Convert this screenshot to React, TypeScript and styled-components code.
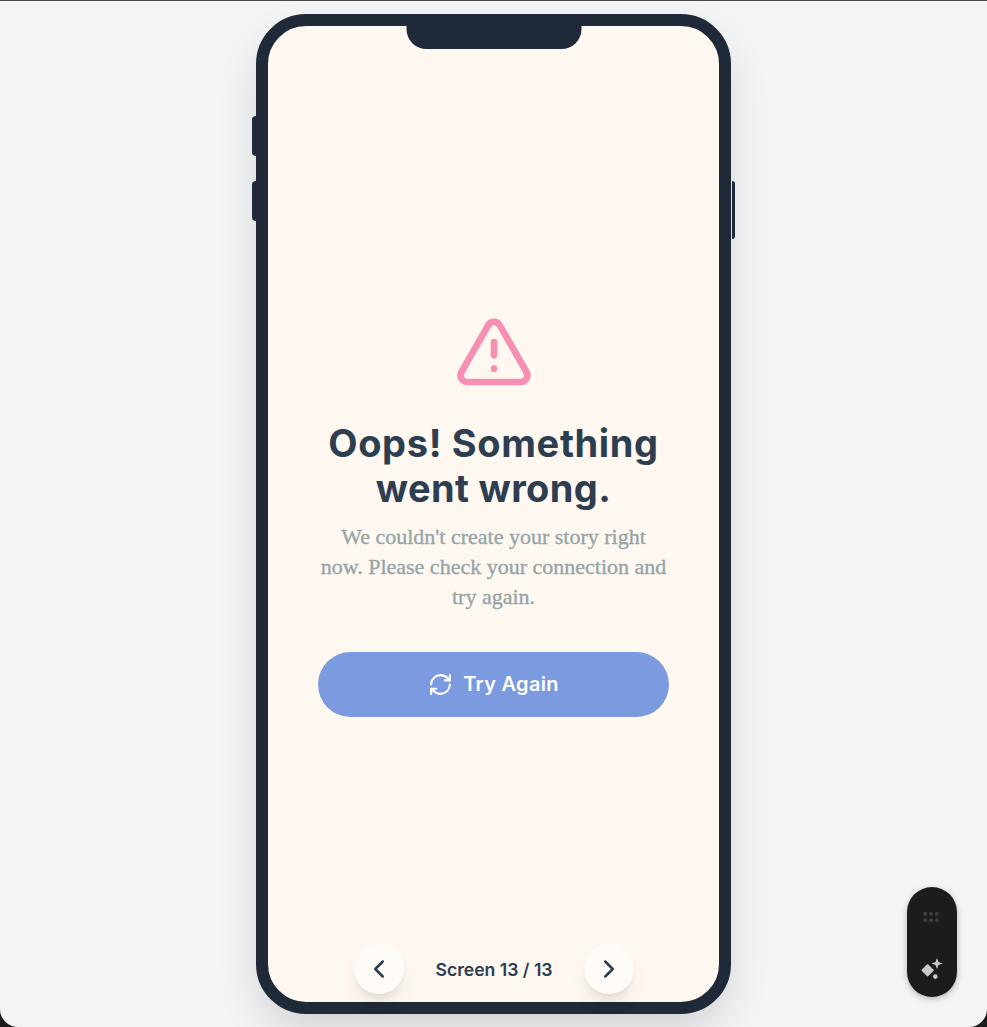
import React from "react";
import styled, { createGlobalStyle, css } from "styled-components";
import { TriangleAlert, ChevronLeft, ChevronRight, RefreshCw } from "lucide-react";

const GlobalStyle = createGlobalStyle`
  * { box-sizing: border-box; }
  body { margin: 0; background: #1c1c1c; overflow: hidden; }
`;

const Page = styled.main`
  position: relative;
  height: 1027px;
  display: flex;
  justify-content: center;
  align-items: flex-start;
  padding-top: 13px;
  background: #f3f4f6;
  border-top: 1px solid #47474a;
  border-radius: 0 0 18px 18px;
  overflow: hidden;
  font-family: Inter, sans-serif;
`;

const Phone = styled.section`
  position: relative;
  width: 475px;
  height: 1000px;
  display: flex;
  border: 12px solid #1f2937;
  border-radius: 50px;
  background: #fff8f1;
  box-shadow: 0 20px 45px -7px rgba(0, 0, 0, 0.16);
`;

const Notch = styled.div`
  position: absolute;
  top: -1px;
  left: 50%;
  width: 175px;
  height: 24px;
  transform: translateX(-50%);
  background: #1f2937;
  border-radius: 0 0 20px 20px;
`;

const SideKey = styled.div<{ $side: "left" | "right"; $top: number; $length: number }>`
  position: absolute;
  top: ${(p) => p.$top}px;
  height: ${(p) => p.$length}px;
  background: #1f2937;
  ${(p) =>
    p.$side === "left"
      ? css`left: -16px; width: 4px; border-radius: 4px 0 0 4px;`
      : css`right: -16px; width: 3px; border-radius: 0 3px 3px 0;`}
`;

const Content = styled.div`
  flex: 1;
  display: flex;
  flex-direction: column;
  align-items: center;
  justify-content: center;
  padding: 0 50px;
  text-align: center;
`;

const Title = styled.h1`
  margin: 29px 0 11px;
  color: #2c3e50;
  font: 700 38px/45px Inter, sans-serif;
`;

const Line = styled.span<{ $spacing?: number }>`
  display: block;
  white-space: nowrap;
  letter-spacing: ${(p) => p.$spacing ?? 0}px;
`;

const Message = styled.p`
  margin: 0 0 40px;
  color: #95a5a6;
  font: 400 22px/30px "Liberation Serif", serif;
  -webkit-text-stroke: 0.35px #95a5a6;
`;

const RetryButton = styled.button`
  width: 100%;
  height: 65px;
  display: flex;
  align-items: center;
  justify-content: center;
  gap: 10px;
  border: 0;
  border-radius: 33px;
  background: #7b9ae0;
  color: #fff;
  font: 600 20px/30px Inter, sans-serif;
`;

const Pager = styled.nav`
  position: absolute;
  bottom: 8px;
  left: 86px;
  width: 280px;
  display: flex;
  align-items: center;
  justify-content: space-between;
  color: #2c3e50;
`;

const PagerButton = styled.button`
  width: 50px;
  height: 50px;
  display: grid;
  place-items: center;
  padding: 0;
  border: 0;
  border-radius: 50%;
  background: #fffcf7;
  color: #2c3e50;
  box-shadow: 0 12px 19px -4px rgba(0, 0, 0, 0.1), 0 5px 8px -5px rgba(0, 0, 0, 0.1);
`;

const PageLabel = styled.span`
  padding-top: 2px;
  font: 600 17.6px/26px Inter, sans-serif;
  white-space: nowrap;
`;

const Dock = styled.aside`
  position: absolute;
  right: 30px;
  bottom: 30px;
  width: 50px;
  height: 110px;
  display: flex;
  flex-direction: column;
  align-items: center;
  justify-content: space-between;
  padding: 22px 2px 16px 0;
  border-radius: 25px;
  background: #1c1c1c;
  box-shadow: 0 2px 6px rgba(0, 0, 0, 0.25);
`;

const GripIcon = () => (
  <svg width="16" height="16" viewBox="0 0 16 16" fill="#3e3e42">
    {[2.2, 8, 13.8].map((x) =>
      [4.8, 11.2].map((y) => <circle key={`${x}-${y}`} cx={x} cy={y} r="2" />)
    )}
  </svg>
);

const SparkIcon = () => (
  <svg width="24" height="24" viewBox="0 0 24 24" fill="#c8cac8">
    <rect x="4" y="8.7" width="9.2" height="9.2" rx="1" transform="rotate(45 8.6 13.3)" />
    <path d="M18 1l1.5 4 4 1.5-4 1.5-1.5 4-1.5-4-4-1.5 4-1.5z" />
    <circle cx="16.3" cy="19.6" r="2.3" />
  </svg>
);

export default function App() {
  return (
    <>
      <GlobalStyle />
      <Page>
        <Phone>
          <Notch />
          <SideKey $side="left" $top={90} $length={40} />
          <SideKey $side="left" $top={155} $length={40} />
          <SideKey $side="right" $top={155} $length={58} />
          <Content>
            <TriangleAlert size={80} color="#f78fb3" />
            <Title>
              <Line $spacing={0.65}>Oops! Something</Line>
              <Line $spacing={0.35}>went wrong.</Line>
            </Title>
            <Message>
              <Line>We couldn't create your story right</Line>
              <Line>now. Please check your connection and</Line>
              <Line>try again.</Line>
            </Message>
            <RetryButton>
              <RefreshCw size={25} />
              <Line $spacing={0.3}>Try Again</Line>
            </RetryButton>
          </Content>
          <Pager>
            <PagerButton aria-label="Previous screen"><ChevronLeft size={30} /></PagerButton>
            <PageLabel>Screen 13 / 13</PageLabel>
            <PagerButton aria-label="Next screen"><ChevronRight size={30} /></PagerButton>
          </Pager>
        </Phone>
        <Dock>
          <GripIcon />
          <SparkIcon />
        </Dock>
      </Page>
    </>
  );
}
